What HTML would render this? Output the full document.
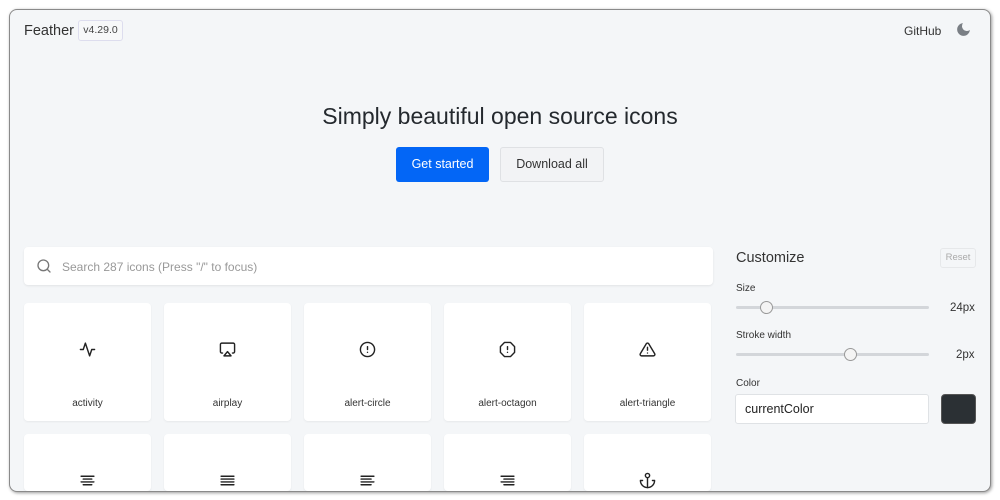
<!DOCTYPE html>
<html><head><meta charset="utf-8"><style>
*{box-sizing:border-box;margin:0;padding:0}
html,body{width:1000px;height:500px;overflow:hidden}
body{background:#fff;font-family:"Liberation Sans",sans-serif;color:#24292e;position:relative}
.frame{position:absolute;left:9px;top:9px;width:982px;height:483px;border:1px solid #8a8a8a;border-radius:8px;background:#f4f6f8;overflow:hidden;box-shadow:1px 1px 3px rgba(0,0,0,.4)}
.abs{position:absolute}
.card{position:absolute;width:127px;height:118px;background:#fff;border-radius:4px;box-shadow:0 1px 2px rgba(0,0,0,.06)}
.card.r2{height:57px}
.card svg{position:absolute;left:55px;top:38px}
.card span{position:absolute;left:0;right:0;top:95px;text-align:center;font-size:10px;color:#333}
.slider{position:absolute;left:726px;width:193px;height:3px;background:#d3d6da;border-radius:2px}
.thumb{position:absolute;width:13px;height:13px;border-radius:50%;background:#f4f4f4;border:1px solid #999;top:-5px}
</style></head><body>
<div class="frame">
<div class="abs" style="left:14px;top:13px;font-size:14.5px;color:#333">Feather</div>
<div class="abs" style="left:68px;top:10px;width:45px;height:21px;border:1px solid #dde;border-radius:3px;font-size:10.5px;color:#444;text-align:center;line-height:19px;background:#f7f8f9">v4.29.0</div>
<div class="abs" style="left:894px;top:14px;font-size:12px;color:#333">GitHub</div>
<svg class="abs" style="left:945px;top:11px" width="17" height="17" viewBox="0 0 24 24"><path d="M21 12.79A9 9 0 1 1 11.21 3 7 7 0 0 0 21 12.79z" fill="#7a7f85"/></svg>
<div class="abs" style="left:0;width:980px;top:93px;text-align:center;font-size:23px;color:#24292e">Simply beautiful open source icons</div>
<div class="abs" style="left:386px;top:137px;width:93px;height:35px;background:#0366f6;border-radius:3px;color:#fff;font-size:12.5px;text-align:center;line-height:35px">Get started</div>
<div class="abs" style="left:490px;top:137px;width:104px;height:35px;background:#f2f3f5;border:1px solid #dfe1e4;border-radius:3px;color:#333;font-size:12.5px;text-align:center;line-height:33px">Download all</div>
<div class="abs" style="left:14px;top:237px;width:689px;height:38px;background:#fff;border-radius:4px;box-shadow:0 1px 2px rgba(0,0,0,.08)"></div>
<svg class="abs" style="left:26px;top:248px" width="16" height="16" viewBox="0 0 24 24" fill="none" stroke="#777" stroke-width="2" stroke-linecap="round"><circle cx="11" cy="11" r="8"/><line x1="21" y1="21" x2="16.65" y2="16.65"/></svg>
<div class="abs" style="left:52px;top:250px;font-size:12px;color:#999">Search 287 icons (Press "/" to focus)</div>

<div class="card" style="left:14px;top:293px"><svg width="17" height="17" viewBox="0 0 24 24" fill="none" stroke="#222" stroke-width="2" stroke-linecap="round" stroke-linejoin="round"><polyline points="22 12 18 12 15 21 9 3 6 12 2 12"/></svg><span>activity</span></div>
<div class="card" style="left:154px;top:293px"><svg width="17" height="17" viewBox="0 0 24 24" fill="none" stroke="#222" stroke-width="2" stroke-linecap="round" stroke-linejoin="round"><path d="M5 17H4a2 2 0 0 1-2-2V5a2 2 0 0 1 2-2h16a2 2 0 0 1 2 2v10a2 2 0 0 1-2 2h-1"/><polygon points="12 15 17 21 7 21 12 15"/></svg><span>airplay</span></div>
<div class="card" style="left:294px;top:293px"><svg width="17" height="17" viewBox="0 0 24 24" fill="none" stroke="#222" stroke-width="2" stroke-linecap="round" stroke-linejoin="round"><circle cx="12" cy="12" r="10"/><line x1="12" y1="8" x2="12" y2="12"/><line x1="12" y1="16" x2="12.01" y2="16"/></svg><span>alert-circle</span></div>
<div class="card" style="left:434px;top:293px"><svg width="17" height="17" viewBox="0 0 24 24" fill="none" stroke="#222" stroke-width="2" stroke-linecap="round" stroke-linejoin="round"><polygon points="7.86 2 16.14 2 22 7.86 22 16.14 16.14 22 7.86 22 2 16.14 2 7.86 7.86 2"/><line x1="12" y1="8" x2="12" y2="12"/><line x1="12" y1="16" x2="12.01" y2="16"/></svg><span>alert-octagon</span></div>
<div class="card" style="left:574px;top:293px"><svg width="17" height="17" viewBox="0 0 24 24" fill="none" stroke="#222" stroke-width="2" stroke-linecap="round" stroke-linejoin="round"><path d="M10.29 3.86L1.82 18a2 2 0 0 0 1.71 3h16.94a2 2 0 0 0 1.71-3L13.71 3.86a2 2 0 0 0-3.42 0z"/><line x1="12" y1="9" x2="12" y2="13"/><line x1="12" y1="17" x2="12.01" y2="17"/></svg><span>alert-triangle</span></div>

<div class="card r2" style="left:14px;top:424px"><svg width="17" height="17" viewBox="0 0 24 24" fill="none" stroke="#222" stroke-width="2" stroke-linecap="round"><line x1="18" y1="10" x2="6" y2="10"/><line x1="21" y1="6" x2="3" y2="6"/><line x1="21" y1="14" x2="3" y2="14"/><line x1="18" y1="18" x2="6" y2="18"/></svg></div>
<div class="card r2" style="left:154px;top:424px"><svg width="17" height="17" viewBox="0 0 24 24" fill="none" stroke="#222" stroke-width="2" stroke-linecap="round"><line x1="21" y1="10" x2="3" y2="10"/><line x1="21" y1="6" x2="3" y2="6"/><line x1="21" y1="14" x2="3" y2="14"/><line x1="21" y1="18" x2="3" y2="18"/></svg></div>
<div class="card r2" style="left:294px;top:424px"><svg width="17" height="17" viewBox="0 0 24 24" fill="none" stroke="#222" stroke-width="2" stroke-linecap="round"><line x1="17" y1="10" x2="3" y2="10"/><line x1="21" y1="6" x2="3" y2="6"/><line x1="21" y1="14" x2="3" y2="14"/><line x1="17" y1="18" x2="3" y2="18"/></svg></div>
<div class="card r2" style="left:434px;top:424px"><svg width="17" height="17" viewBox="0 0 24 24" fill="none" stroke="#222" stroke-width="2" stroke-linecap="round"><line x1="21" y1="10" x2="7" y2="10"/><line x1="21" y1="6" x2="3" y2="6"/><line x1="21" y1="14" x2="3" y2="14"/><line x1="21" y1="18" x2="7" y2="18"/></svg></div>
<div class="card r2" style="left:574px;top:424px"><svg width="17" height="17" viewBox="0 0 24 24" fill="none" stroke="#222" stroke-width="2" stroke-linecap="round" stroke-linejoin="round"><circle cx="12" cy="5" r="3"/><line x1="12" y1="22" x2="12" y2="8"/><path d="M5 12H2a10 10 0 0 0 20 0h-3"/></svg></div>

<div class="abs" style="left:726px;top:240px;font-size:14.5px;color:#333">Customize</div>
<div class="abs" style="left:930px;top:238px;width:36px;height:20px;border:1px solid #e6e8ea;border-radius:3px;font-size:9.5px;color:#aaa;text-align:center;line-height:18px">Reset</div>
<div class="abs" style="left:726px;top:273px;font-size:10px;color:#333">Size</div>
<div class="slider" style="top:296px"><div class="thumb" style="left:24px"></div></div>
<div class="abs" style="left:940px;top:292px;font-size:11.5px;color:#333">24px</div>
<div class="abs" style="left:726px;top:320px;font-size:10px;color:#333">Stroke width</div>
<div class="slider" style="top:343px"><div class="thumb" style="left:108px"></div></div>
<div class="abs" style="left:946px;top:339px;font-size:11.5px;color:#333">2px</div>
<div class="abs" style="left:726px;top:368px;font-size:10px;color:#333">Color</div>
<div class="abs" style="left:725px;top:384px;width:194px;height:30px;background:#fff;border:1px solid #dfe2e5;border-radius:3px;font-size:12.5px;color:#222;padding-left:9px;line-height:28px">currentColor</div>
<div class="abs" style="left:931px;top:384px;width:35px;height:30px;background:#2b3034;border:1px solid #555;border-radius:4px"></div>
</div>
</body></html>
